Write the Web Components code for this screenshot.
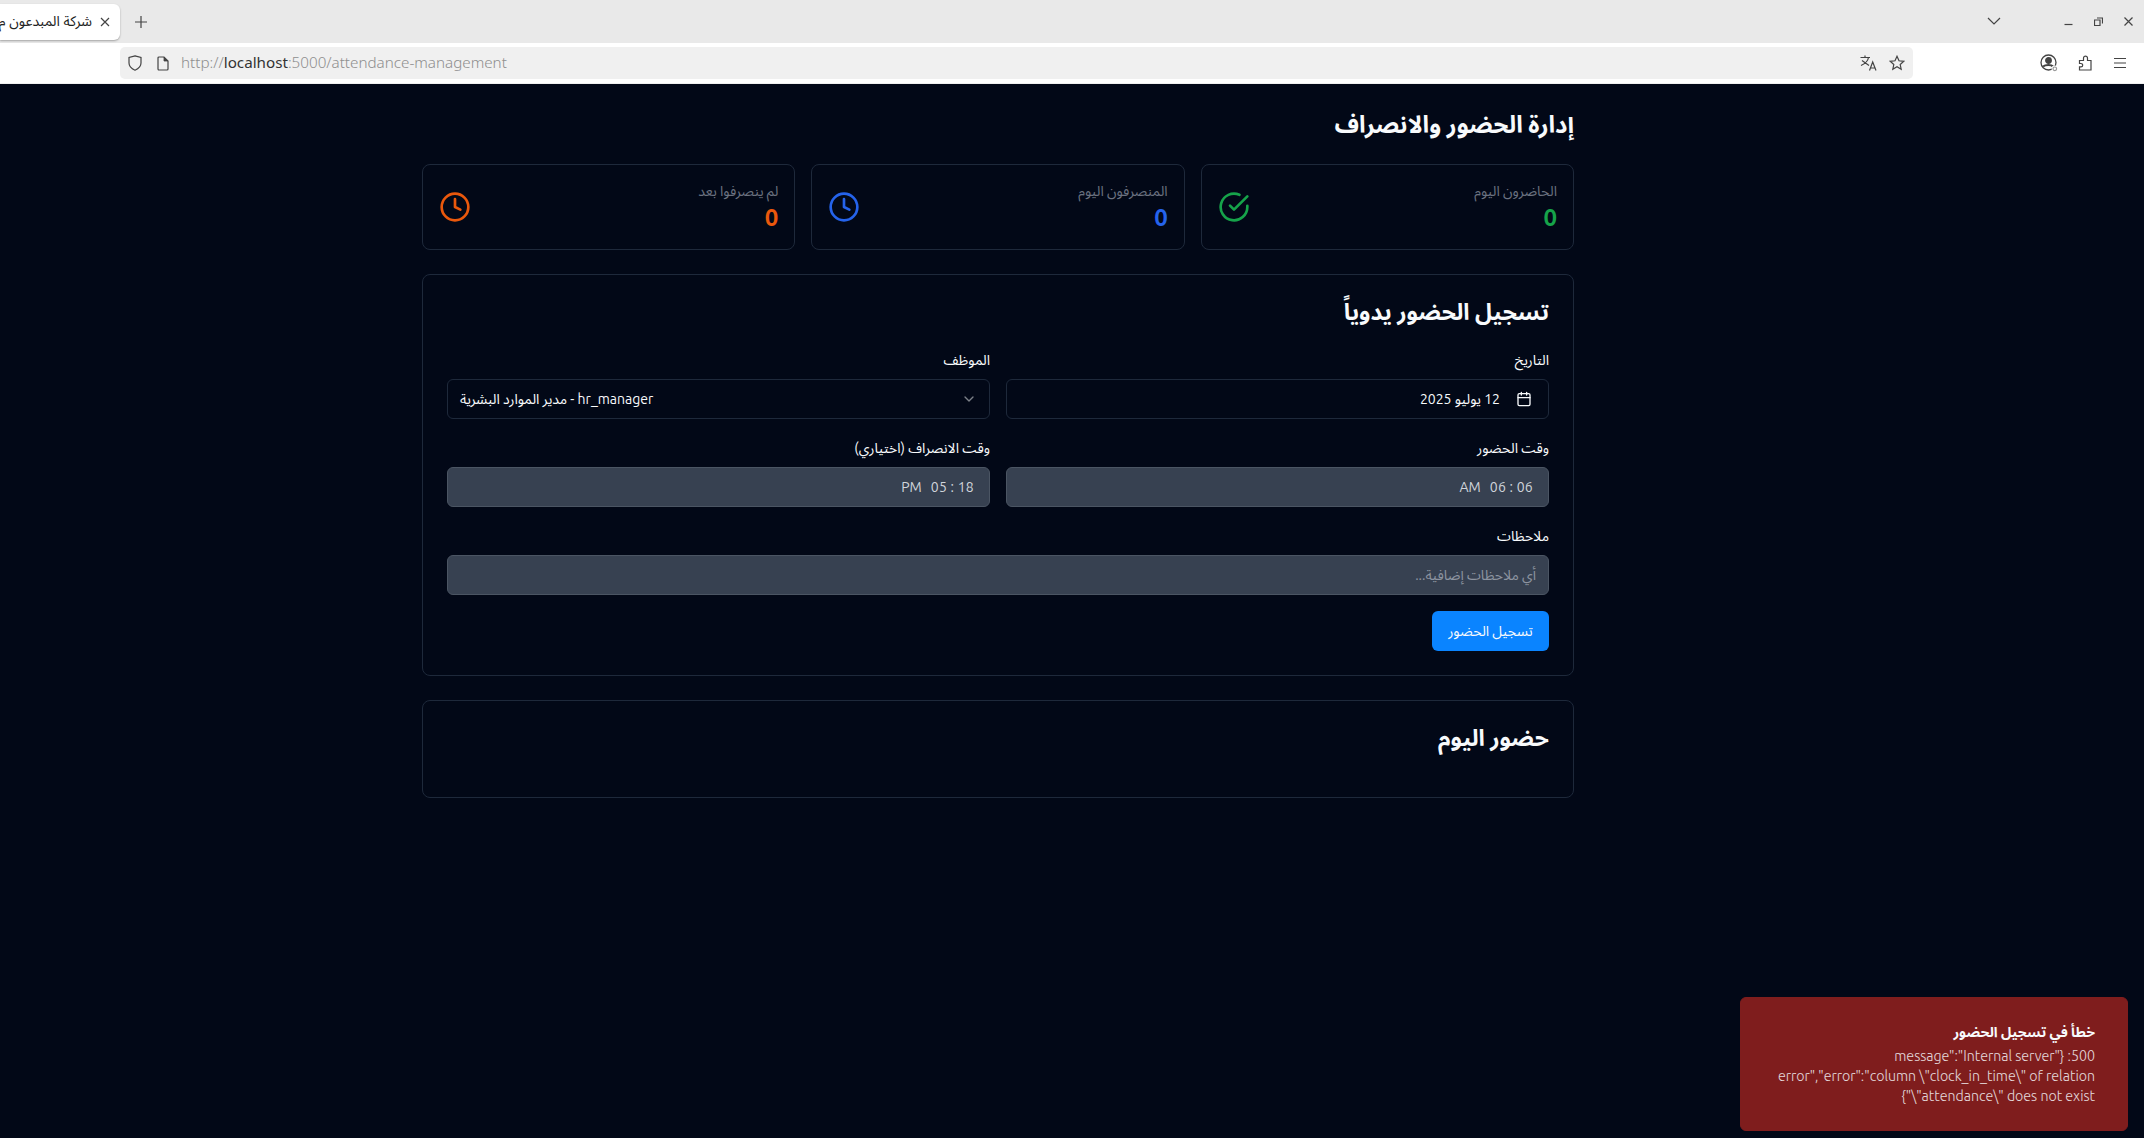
<!DOCTYPE html>
<html lang="ar"><head><meta charset="utf-8"><title>شركة المبدعون</title>
<style>
html,body{margin:0;height:100%;overflow:hidden}
body{display:flex;flex-direction:column;background:#020817;font-family:"Ubuntu","Noto Sans Arabic","Noto Sans",sans-serif}
</style></head><body>
<template id="t-chrome"><style>
:host{display:block;flex:none;font-family:"Noto Sans","Noto Sans Arabic",sans-serif;color:#444}
svg{display:block;flex:none;fill:none;stroke:currentColor;stroke-width:1.2}
.tabs{height:43px;background:#e9e9e9;display:flex;align-items:center;box-sizing:border-box}
.tab{width:120px;height:36px;background:#fff;border-radius:0 6px 6px 0;box-shadow:0 1px 2px rgba(0,0,0,.3);display:flex;align-items:center;overflow:hidden;box-sizing:border-box;padding-right:9px;flex:none;gap:7px}
.tab .t{flex:1;min-width:0;white-space:nowrap;font-size:14px;color:#222;direction:rtl;overflow:hidden;text-align:right}
.plus{margin-left:14px}
.sp{flex:1}
.win{display:flex;align-items:center;margin-right:11px;margin-left:63px;gap:21px}
.tool{height:41px;background:#fff;border-bottom:1px solid #f0f0f0;display:flex;align-items:center;box-sizing:border-box;padding-left:120px;padding-right:17px}
.url{width:1793px;height:32px;background:#f0f0f0;border-radius:5px;display:flex;align-items:center;box-sizing:border-box;padding:0 8px}
.addr{font-size:15.2px;font-weight:300;color:#8e8e8e;margin-left:12px;white-space:nowrap;padding-bottom:2px}
.addr b{font-weight:400;color:#333}
</style>
<div class="tabs">
<div class="tab"><span class="t">شركة المبدعون م</span><svg width="12" height="12" viewBox="0 0 12 12" stroke-width="1.5"><path d="M2 2l8 8M10 2l-8 8"/></svg></div>
<svg class="plus" width="14" height="14" viewBox="0 0 14 14"><path d="M7 1v12M1 7h12"/></svg>
<div class="sp"></div>
<svg width="14" height="9" viewBox="0 0 14 9"><path d="M1 1l6 6 6-6"/></svg>
<div class="win">
<svg width="9" height="9" viewBox="0 0 9 9"><path d="M.5 7.500h8"/></svg>
<svg width="9" height="9" viewBox="0 0 9 9" stroke-width="1"><path d="M.5 3h5.500v5.500h-5.500zM3 1h5.500v5.500"/></svg>
<svg width="9" height="9" viewBox="0 0 9 9"><path d="M.5.500l8 8M8.500.500l-8 8"/></svg>
</div></div>
<div class="tool"><div class="url">
<svg width="14" height="16" viewBox="0 0 14 16"><path d="M7 .8l6 1.700v5.500c0 3.500-2.500 5.700-6 7.200-3.500-1.500-6-3.700-6-7.200V2.500z"/></svg>
<svg style="margin-left:15px" width="12" height="15" viewBox="0 0 12 15" stroke-width="1.4"><path d="M2 1h5l4 4v8a1 1 0 0 1-1 1H2a1 1 0 0 1-1-1V2a1 1 0 0 1 1-1z"/><path d="M7 1l4 4H7z" fill="currentColor" stroke-width=".8"/></svg>
<span class="addr">http://<b>localhost</b>:5000/attendance-management</span>
<div class="sp"></div>
<svg width="18" height="16" viewBox="0 0 18 16" stroke-width="1.100"><path d="M.5 2.500h9.500M5 .5v2M2 5.500l7 5M8.500 2.500C8 5.500 5.500 8.500 1 10.500M9.500 15.500L12.700 7l3.300 8.500M10.500 13h4.500"/></svg>
<svg style="margin-left:11px" width="16" height="16" viewBox="0 0 16 16"><path d="M8 1.300l2 4.500 4.800.5-3.600 3.200 1 4.800L8 11.800l-4.200 2.500 1-4.800L1.200 6.300 6 5.800z"/></svg>
</div>
<div class="sp"></div>
<svg width="18" height="18" viewBox="0 0 18 18"><circle cx="8.500" cy="8.500" r="7.500" stroke-width="1.300"/><circle cx="8.500" cy="6.500" r="2.800" fill="currentColor"/><path d="M3 12.500c2.500-2 8.500-2 10 0" stroke-width="2.200"/><circle cx="14.800" cy="14.800" r="2.600" fill="#fff" stroke="#fff"/><circle cx="14.800" cy="14.800" r="1.800" stroke="#999"/></svg>
<svg style="margin-left:19px" width="16" height="16" viewBox="0 0 16 16" stroke-width="1.300"><path d="M2.500 15H14V5.500h-3.500V3.200a2 2 0 0 0-4 0v2.300H2.500v3h1.500a1.700 1.700 0 0 1 0 3.400H2.500z"/></svg>
<svg style="margin-left:20.500px" width="14" height="12" viewBox="0 0 14 12"><path d="M1 1.500h12M1 6h12M1 10.500h12"/></svg>
</div></template>
<template id="t-card"><style>
:host{display:block;background:#020817;border:1px solid #1e293b;border-radius:8px;padding:24px;color:#f8fafc}
h2{margin:0;font-size:22.9px;line-height:26px;padding-bottom:6px;font-weight:700;color:#f8fafc}
</style><h2><slot name="title"></slot></h2><slot></slot></template>
<template id="t-field"><style>
:host{display:block}
label{display:block;font-size:14px;line-height:18px;color:#f8fafc;margin-bottom:10px}
.box{height:40px;box-sizing:border-box;border-radius:6px;border:1px solid #1e293b;display:flex;align-items:center;font-size:14px;color:#f8fafc;padding:0 12px}
:host([filled]) .box{background:#374151;border-color:#4b5563;color:#d1d5db}
:host([ph]) .box{color:#8d94a0}
:host([time]) .box{padding-right:15px;gap:9px}
:host([date]) .box{padding-right:16px;gap:16px}
:host([select]) .box{direction:ltr;justify-content:space-between}
</style><label><slot name="label"></slot></label><div class="box"><slot></slot></div></template>
<template id="t-toast"><style>
:host{display:block;position:absolute;right:16px;bottom:7px;width:388px;box-sizing:border-box;background:#7f1d1d;border:1px solid #7f1d1d;border-radius:6px;padding:24px 32px 24px 24px;color:#f8fafc;font-size:14px;line-height:20px}
.t{font-weight:700;margin-bottom:4px}
.d{opacity:.85;font-weight:300;font-size:14.200px;overflow-wrap:anywhere}
</style><div class="t"><slot name="title"></slot></div><div class="d"><slot></slot></div></template>
<script>
function def(n,id){customElements.define(n,class extends HTMLElement{constructor(){super();this.attachShadow({mode:'open'}).appendChild(document.getElementById(id).content.cloneNode(true))}})}
def('browser-chrome','t-chrome');def('x-card','t-card');def('x-field','t-field');def('x-toast','t-toast');
customElements.define('x-stat',class extends HTMLElement{connectedCallback(){if(this.shadowRoot)return;
const ic=this.getAttribute('icon')==='check'?'<path d="M22 11.080V12a10 10 0 1 1-5.930-9.140"/><path d="m9 11 3 3L22 4"/>':'<circle cx="12" cy="12" r="10"/><polyline points="12 6 12 12 16 14"/>';
this.attachShadow({mode:'open'}).innerHTML=`<style>
:host{display:flex;align-items:center;justify-content:space-between;flex-direction:row-reverse;direction:ltr;border:1px solid #1e293b;border-radius:8px;padding:16px;box-sizing:border-box;height:86px}
.b{direction:rtl;text-align:right}
.l{font-size:14px;line-height:20px;color:#6b7280}
.v{font-size:24px;line-height:34px;margin-bottom:-2px;font-weight:700;color:var(--c)}
svg{display:block;width:32px;height:32px;stroke:var(--c);fill:none;stroke-width:2;stroke-linecap:round;stroke-linejoin:round}
</style><div class="b"><div class="l"><slot name="label"></slot></div><div class="v"><slot name="value"></slot></div></div><svg viewBox="0 0 24 24">${ic}</svg>`}});
customElements.define('x-page',class extends HTMLElement{constructor(){super();this.attachShadow({mode:'open'}).innerHTML=`<style>
:host{display:block;flex:1;min-height:0;position:relative;padding:24px 148px 0 0;box-sizing:border-box;color:#f8fafc}
.c{width:1152px;margin:0 auto;direction:rtl;display:flex;flex-direction:column;gap:24px}
h1{margin:0 0 -2px;font-size:24px;line-height:34px;font-weight:700}
</style><div class="c"><h1><slot name="heading"></slot></h1><slot></slot></div><slot name="over"></slot>`}});
customElements.define('x-stats',class extends HTMLElement{constructor(){super();this.attachShadow({mode:'open'}).innerHTML=`<style>:host{display:grid;grid-template-columns:repeat(3,1fr);gap:16px}</style><slot></slot>`}});
customElements.define('x-form',class extends HTMLElement{constructor(){super();this.attachShadow({mode:'open'}).innerHTML=`<style>:host{display:grid;grid-template-columns:1fr 1fr;gap:20px 16px;margin-top:20px}::slotted(.w){grid-column:1/-1}</style><slot></slot>`}});
customElements.define('x-button',class extends HTMLElement{constructor(){super();this.attachShadow({mode:'open'}).innerHTML=`<style>:host{display:flex;align-items:center;justify-content:center;width:117px;height:40px;box-sizing:border-box;border-radius:6px;background:#0a84ff;color:#f8fafc;font-size:14px;margin-top:16px}</style><slot></slot>`}});
</script>
<browser-chrome></browser-chrome>
<x-page>
<span slot="heading">إدارة الحضور والانصراف</span>
<x-stats>
<x-stat icon="check" style="--c:#16a34a"><span slot="label">الحاضرون اليوم</span><span slot="value">0</span></x-stat>
<x-stat icon="clock" style="--c:#2563eb"><span slot="label">المنصرفون اليوم</span><span slot="value">0</span></x-stat>
<x-stat icon="clock" style="--c:#ea580c"><span slot="label">لم ينصرفوا بعد</span><span slot="value">0</span></x-stat>
</x-stats>
<x-card><span slot="title">تسجيل الحضور يدوياً</span>
<x-form>
<x-field date><span slot="label">التاريخ</span><svg width="16" height="16" viewBox="0 0 24 24" fill="none" stroke="#f8fafc" stroke-width="2" stroke-linecap="round" stroke-linejoin="round"><path d="M8 2v4M16 2v4"/><rect width="18" height="18" x="3" y="4" rx="2"/><path d="M3 10h18"/></svg><span>12 يوليو 2025</span></x-field>
<x-field select><span slot="label">الموظف</span><span dir="rtl">hr_manager - مدير الموارد البشرية</span><svg width="16" height="16" viewBox="0 0 24 24" fill="none" stroke="#f8fafc" stroke-opacity=".5" stroke-width="2" stroke-linecap="round" stroke-linejoin="round"><path d="m6 9 6 6 6-6"/></svg></x-field>
<x-field filled time><span slot="label">وقت الحضور</span><span dir="ltr" style="letter-spacing:.25px">06 : 06</span><span dir="ltr">AM</span></x-field>
<x-field filled time><span slot="label">وقت الانصراف (اختياري)</span><span dir="ltr" style="letter-spacing:.25px">05 : 18</span><span dir="ltr">PM</span></x-field>
<x-field class="w" filled ph><span slot="label">ملاحظات</span><span>أي ملاحظات إضافية...</span></x-field>
</x-form>
<x-button>تسجيل الحضور</x-button>
</x-card>
<x-card style="padding-bottom:40px"><span slot="title">حضور اليوم</span></x-card>
<x-toast slot="over" dir="rtl"><span slot="title">خطأ في تسجيل الحضور</span>500: {"message":"Internal server error","error":"column \"clock_in_time\" of relation \"attendance\" does not exist"}</x-toast>
</x-page>
</body></html>
